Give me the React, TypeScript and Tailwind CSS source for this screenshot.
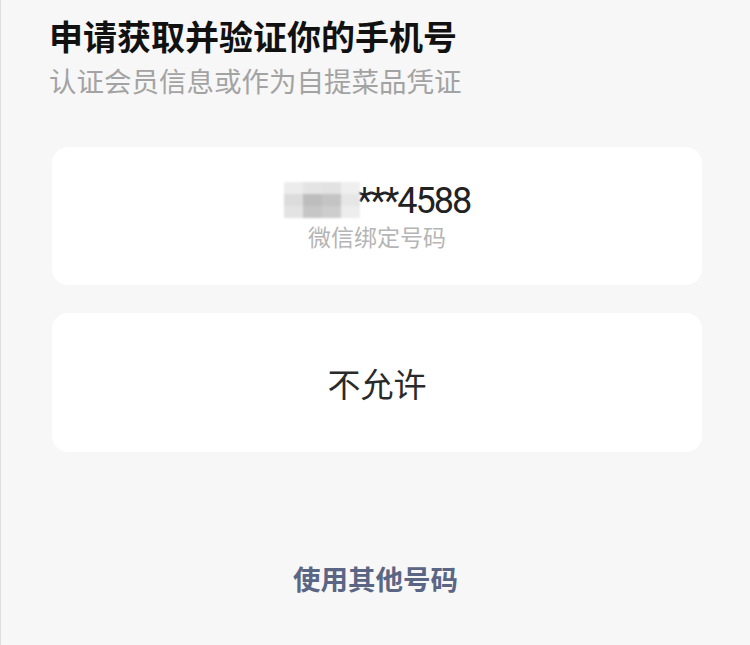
import React from "react";

const CJK = "font-['Noto_Sans_CJK_SC',sans-serif]";

// 打码的号码前段（马赛克）
const Mosaic = () => {
  const cells = [
    "#ececec", "#e4e4e4", "#e2e2e2", "#efefef",
    "#dcdcdc", "#bdbdbd", "#c4c4c4", "#e6e6e6",
    "#e3e3e3", "#c6c6c6", "#cdcdcd", "#ededed",
  ];
  return (
    <div className="grid grid-cols-4 w-[76px] h-[36px] blur-[1px] mr-[-3px] mb-[2px]">
      {cells.map((c, i) => (
        <div key={i} style={{ backgroundColor: c }} />
      ))}
    </div>
  );
};

export default function App() {
  return (
    <div
      className={`h-[645px] w-[750px] bg-[#f7f7f7] border-l border-[#dedede] px-12 pt-[14px] flex flex-col ${CJK}`}
    >
      <h1 className="text-[34px] leading-[44px] font-bold text-[#111]">
        申请获取并验证你的手机号
      </h1>
      <p className="text-[27.5px] leading-[36px] text-[#a3a3a3] mt-[4px]">
        认证会员信息或作为自提菜品凭证
      </p>

      <div className="mt-[49px] ml-[3px] h-[138px] rounded-2xl bg-white flex flex-col items-center justify-center">
        <div className="flex items-center">
          <Mosaic />
          <span className="font-['Roboto',sans-serif] text-[36px] leading-[40px] tracking-[-2px] text-[#222]">
            ***4588
          </span>
        </div>
        <span className="text-[23px] leading-[30px] text-[#b5b5b5]">
          微信绑定号码
        </span>
      </div>

      <div className="mt-[28px] ml-[3px] h-[139px] rounded-2xl bg-white flex items-center justify-center">
        <span className="text-[33px] leading-[40px] text-[#2a2a2a]">不允许</span>
      </div>

      <div className="mt-[108px] flex justify-center">
        <span className="text-[27.5px] leading-[36px] font-bold text-[#5a6684]">
          使用其他号码
        </span>
      </div>
    </div>
  );
}
